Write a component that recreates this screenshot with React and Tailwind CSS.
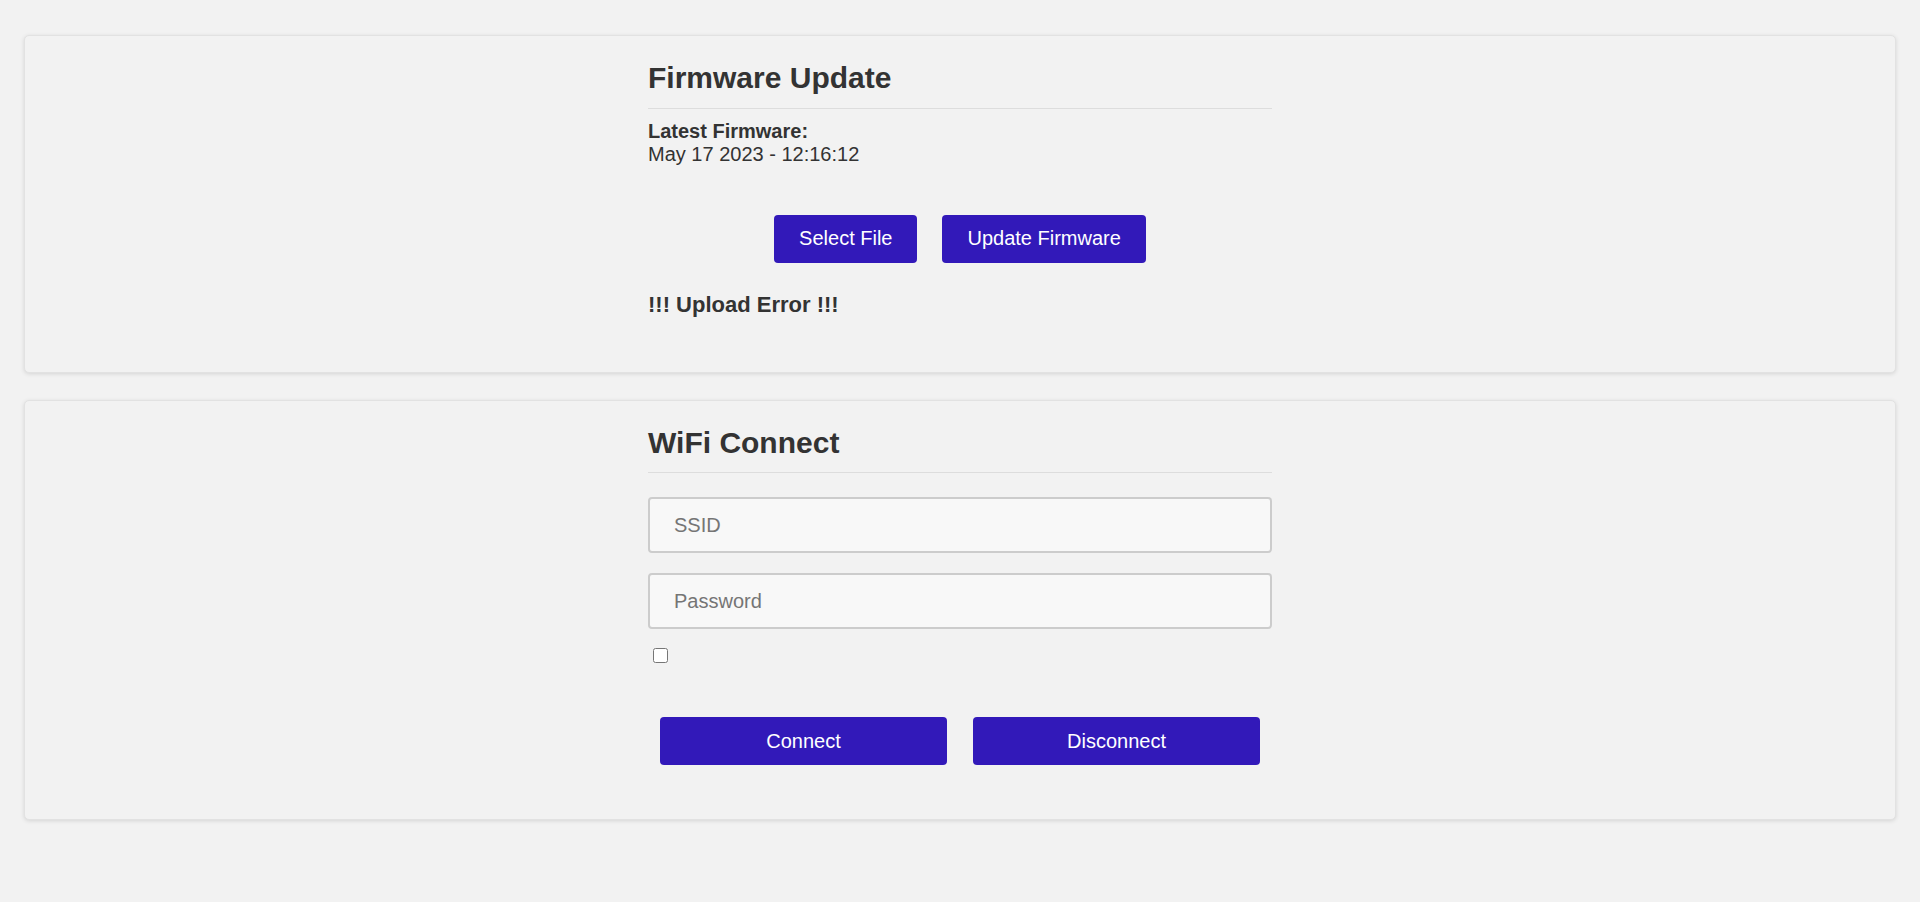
export default function App() {
    return (
        <div className="min-h-screen bg-[#f2f2f2] px-[24px] pt-[35px] pb-[40px] font-['Liberation_Sans',Arial,sans-serif] text-[20px] text-[#333]">
            {/* Firmware Update */}
            <div className="rounded-[5px] border border-[#e2e2e2] bg-[#f2f2f2] shadow-[0_1px_4px_rgba(0,0,0,0.12)]">
                <div className="mx-auto w-[624px] pt-[25px] pb-[55px]">
                    <h2 className="border-b border-[#dddddd] pb-[12px] text-[30px] font-bold leading-[34.5px]">
                        Firmware Update
                    </h2>
                    <div className="mt-[11px] leading-[23px]">
                        <p className="font-bold">Latest Firmware:</p>
                        <p>May 17 2023 - 12:16:12</p>
                    </div>
                    <div className="mt-[49px] flex justify-center gap-[25px]">
                        <button className="h-[48px] rounded-[4px] bg-[#3219b9] px-[25px] text-white leading-[23px]">
                            Select File
                        </button>
                        <button className="h-[48px] rounded-[4px] bg-[#3219b9] px-[25px] text-white leading-[23px]">
                            Update Firmware
                        </button>
                    </div>
                    <p className="mt-[29px] text-[22px] font-bold leading-[25px]">!!! Upload Error !!!</p>
                </div>
            </div>

            {/* WiFi Connect */}
            <div className="mt-[27px] rounded-[5px] border border-[#e2e2e2] bg-[#f2f2f2] shadow-[0_1px_4px_rgba(0,0,0,0.12)]">
                <div className="mx-auto w-[624px] pt-[25px] pb-[54px]">
                    <h2 className="border-b border-[#dddddd] pb-[12px] text-[30px] font-bold leading-[34.5px]">
                        WiFi Connect
                    </h2>
                    <input
                        type="text"
                        placeholder="SSID"
                        className="mt-[24px] block h-[56px] w-full rounded-[4px] border-2 border-[#cccccc] bg-[#f8f8f8] pl-[24px] text-[20px] text-[#333] placeholder-[#757575] outline-none"
                    />
                    <input
                        type="password"
                        placeholder="Password"
                        className="mt-[20px] block h-[56px] w-full rounded-[4px] border-2 border-[#cccccc] bg-[#f8f8f8] pl-[24px] text-[20px] text-[#333] placeholder-[#757575] outline-none"
                    />
                    <div className="mt-[19px] flex h-[15px] items-start pl-[5px]">
                        <input type="checkbox" className="m-0 h-[15px] w-[15px]" />
                    </div>
                    <div className="mt-[54px] flex justify-center gap-[26px]">
                        <button className="h-[48px] w-[287px] rounded-[4px] bg-[#3219b9] text-white leading-[23px]">
                            Connect
                        </button>
                        <button className="h-[48px] w-[287px] rounded-[4px] bg-[#3219b9] text-white leading-[23px]">
                            Disconnect
                        </button>
                    </div>
                </div>
            </div>
        </div>
    );
}
